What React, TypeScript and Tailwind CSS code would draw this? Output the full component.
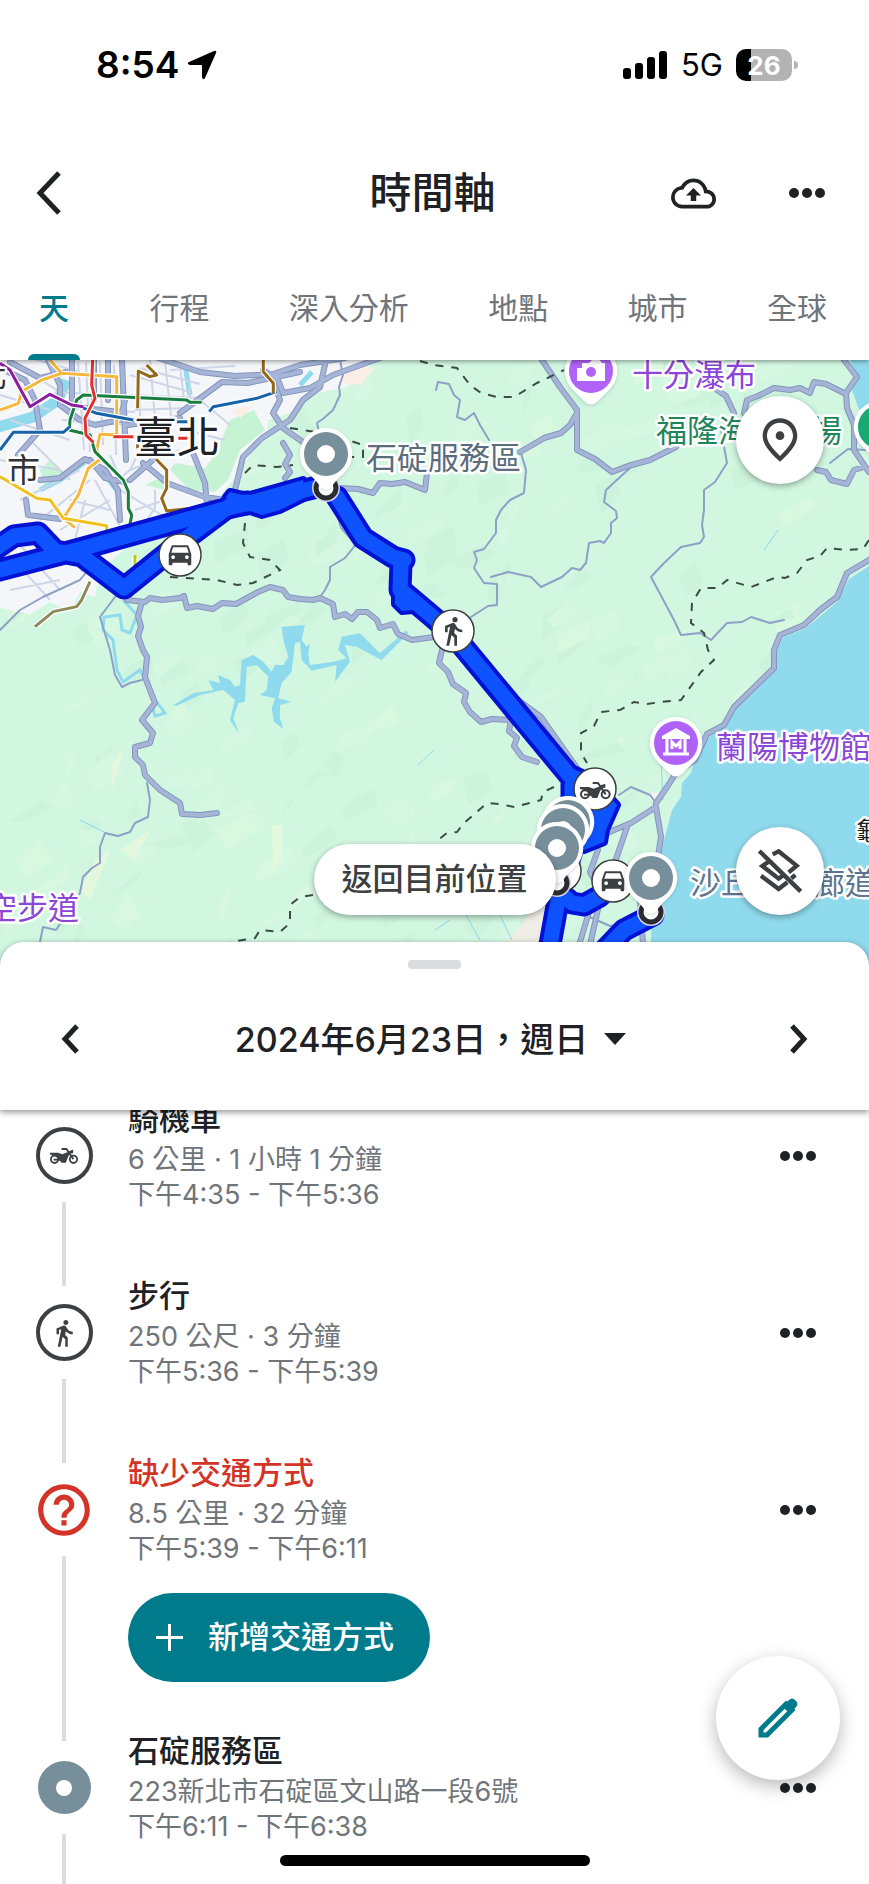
import type { ReactNode } from "react";
import { MdDirectionsCar, MdDirectionsWalk, MdOutlineBackup, MdOutlineHelpOutline, MdOutlinePlace } from "react-icons/md";

const tabs = ["天", "行程", "深入分析", "地點", "城市", "全球"];

const roads = [
  "M326 360 320 387 303 400 290 420 262 438 243 457 235 490",
  "M150 355 200 372 235 376 273 374 300 365 345 358",
  "M380 358 333 375 310 388 283 393 278 380 263 370",
  "M180 413 222 382 248 383 300 372",
  "M193 453 205 483 207 505",
  "M143 463 167 483 205 497 225 500",
  "M273 380 280 400 273 413 283 428 300 440 310 447",
  "M283 443 290 455 285 464 290 472 285 478",
  "M127 600 145 602 150 598 162 600 180 598 184 596 187 608 197 606 213 609 222 603 236 604 247 598 258 592 270 587 283 590 288 597 300 599 313 600 320 598 333 604 335 617 345 614 352 619 358 612 367 612 377 620 380 628 393 624 398 634 412 640 434 637",
  "M142 602 138 616 141 627 138 636 143 650 147 657 145 677 155 703 142 720 153 733 150 743 135 747 135 757 143 765 145 775 160 790 180 803 182 814 200 815 217 813",
  "M542 360 560 387 577 410 577 450 595 459 612 472 628 466 650 460 676 447",
  "M717 390 726 396 734 413",
  "M744 413 747 400 758 396 774 388 790 390 800 388 810 393 814 382 826 384 844 393",
  "M844 360 857 377 846 393 847 408 854 425 854 450 869 472",
  "M817 470 826 472 831 480 847 484 854 470 864 467",
  "M577 413 570 425 561 433 544 438 534 444 520 452",
  "M442 650 439 663 448 672 453 684 466 693 464 702 470 712 481 722 492 719 511 720 509 731 517 738 514 746 522 757 537 762",
  "M514 697 541 717 560 744 577 768",
  "M607 833 631 823 656 807 661 837 657 862",
  "M869 560 847 573 837 597 820 610 804 625 780 635 774 650 774 668 734 707 724 725 707 734 695 760 676 773 667 787 656 803",
  "M627 827 614 865 600 900 590 945",
  "M598 850 590 872 597 885 580 942",
  "M640 900 643 945",
  "M26 500 28 515 60 519",
  "M40 480 60 478 85 459 105 470 118 490 120 520",
  "M48 360 60 385 60 405 80 420 95 425 120 420 125 400",
  "M72 360 72 400 M94 360 94 400 M108 360 108 400 M122 360 126 460",
  "M0 368 25 380 35 400 40 430 18 455",
  "M130 480 155 458 170 440M10 362 40 378 66 372M84 408 120 412M128 425 180 418",
  "M340 488 358 489 373 493 380 483 392 484 405 482 425 490 427 473",
  "M337 507 343 527 357 543",
  "M207 505 190 513M90 460 105 478 125 482",
];

const lanes = [
  "M340 360 343 375 339 387 340 395 333 410 324 418 317 423 320 437",
  "M357 543 345 558 330 567 330 580 325 590 320 597 313 600",
  "M115 597 100 617 110 650 115 675 122 687 130 683 142 680",
  "M147 783 150 800 148 817 135 823 130 832 118 836 105 833 100 847 100 863 92 868 83 877 80 893 62 921 56 930 43 927 40 942",
  "M0 630 20 610 43 597 80 580 100 555",
  "M521 453 526 470 524 493 510 500 501 510 496 520 496 533 484 549 474 552 477 560 474 568 480 577 484 583 497 584 497 605 488 606 471 617",
  "M631 467 606 490 604 502 616 511 617 518 611 523 611 533 604 543 600 541 589 543 586 563 580 570 572 568 562 577 541 587 531 577 508 572 491 577",
  "M721 430 727 463 715 482 704 490 704 510 702 525 704 537 700 543 681 547 664 563 651 577 666 605 674 620 681 635 700 633 711 640 727 623 742 622 751 617 770 623 784 620",
  "M436 390 438 382 449 384 454 395 460 400 457 417 465 420 474 413 480 425 489 440",
  "M619 795 631 787 650 795 656 803",
  "M585 915 610 926 640 920",
  "M830 463 848 449 866 450",
];

const streets =
  "M10 360 60 392M30 358 80 372M55 392 130 396M60 408 135 412M62 420 125 425M78 362 84 450M100 362 103 445M114 365 116 455M140 380 140 440M150 360 156 430M165 362 172 425M130 375 190 392M130 395 200 398M135 410 185 408M0 460 60 470M20 500 80 470M40 520 90 480M60 530 110 500M30 440 70 480M95 480 130 545M85 500 75 540M110 455 130 500M130 470 180 450M135 510 165 500M140 530 155 508 155 490M60 560 110 540M20 545 60 590M80 570 110 580M70 500 110 510M200 400 230 425M185 430 225 440M120 490 170 520M10 590 60 580M145 440 130 470 118 480M190 380 190 410M170 370 235 366M86 362 90 452M0 395 50 410M10 420 70 440M0 545 50 600M180 365 184 400M140 368 200 384";

const boundaries = [
  "M245 523 243 543 250 557 270 560 280 570 253 583 237 585 217 580 170 577",
  "M245 473 253 465 277 467 293 465",
  "M290 428 333 435 363 445 363 457 340 457",
  "M420 361 434 365 457 368 470 385 481 393 497 397 514 397 537 383 564 370",
  "M869 540 863 549 847 550 827 548 820 556 807 560 797 573 785 578 777 577 751 587 727 580 718 588 701 588 692 603 691 623 704 633 708 650 714 660 701 672 681 700 661 702 647 704 634 702 620 710 601 712 594 726 581 733 581 753 587 763",
  "M554 787 543 792 541 800 514 807 500 804 487 803 464 823 457 832 447 833 434 843",
  "M313 895 300 897 290 905 290 923 280 932 260 930 255 938 230 942",
];

const metroLines = [
  { color: "#f5b83d", d: "M0 165 55 145 65 110 125 75 185 55 350 65 350 240 300 238 290 285 305 310 265 340 235 420 190 490 225 518M150 15 185 55" },
  { color: "#f0c020", d: "M0 365 110 430 150 435 190 490 320 512 320 530" },
  { color: "#187d3e", d: "M605 142 570 142 560 135 250 120 230 135 210 195 208 225 270 240 285 290 370 375 385 410 385 460 395 480 388 520" },
  { color: "#1763ab", d: "M0 285 40 232 190 232 210 215M240 155 290 175 400 195M530 200 562 200M628 170 640 155 770 130 830 110" },
  { color: "#8b1c9e", d: "M0 25 30 45 90 155 150 118 215 150 250 155" },
  { color: "#e0312f", d: "M278 15 275 90 285 130 255 190 258 240 280 262M340 245 400 245M535 250 562 250" },
  { color: "#94681a", d: "M440 30 470 60 450 65 415 48 413 160M413 240 413 280M468 312 500 345 500 400 485 430 500 468 575 460M790 15 790 50 820 85 820 115" },
  { color: "#8f8a5c", d: "M270 680 245 735 230 755 160 770 105 815" },
  { color: "#b5cc1f", d: "M330 655 380 675 405 655 405 600" },
];

// Terrain facets: fixed seed, so the relief is the same on every render.
function makeFacets(count: number) {
  let seed = 41;
  const next = (min: number, max: number) => {
    seed = (seed * 16807) % 2147483647;
    return Math.round(min + (seed / 2147483647) * (max - min));
  };
  return Array.from({ length: count }, (_, i) => {
    const x = next(0, 869);
    const y = next(365, 950);
    const w = next(8, 34);
    return {
      d: `M${x} ${y}l${w} ${next(-26, -6)} ${next(-4, 14)} ${next(4, 22)} ${-w} ${next(4, 22)}Z`,
      color: i % 7 === 0 ? "#e0f9e0" : i % 2 ? "#c8f0d8" : "#dbf9e6",
    };
  });
}

const facets = makeFacets(260);

const labels = [
  { text: "北", x: -24, y: 387, size: 31, fill: "#303236" },
  { text: "臺北", x: 134, y: 453, size: 43, fill: "#202124" },
  { text: "市", x: 7, y: 482, size: 33, fill: "#303236" },
  { text: "石碇服務區", x: 366, y: 469, size: 31, fill: "#5b6c7d" },
  { text: "十分瀑布", x: 632, y: 386, size: 31, fill: "#8b46d8" },
  { text: "福隆海水浴場", x: 656, y: 442, size: 31, fill: "#1f855a" },
  { text: "蘭陽博物館", x: 716, y: 758, size: 31, fill: "#8b46d8" },
  { text: "空步道", x: -14, y: 919, size: 31, fill: "#8b46d8" },
  { text: "沙丘生態廊道", x: 690, y: 894, size: 31, fill: "#5b7590" },
  { text: "龜山島", x: 856, y: 840, size: 25, fill: "#202124" },
];

function MotorcycleShape() {
  return (
    <g>
      <g fill="none" stroke="#3c4043" strokeWidth="6">
        <circle cx="15" cy="37" r="12" />
        <circle cx="77" cy="37" r="12" />
        <path d="M38 3H54L77 37" />
      </g>
      <path fill="#3c4043" d="M0 15H27L40 20 57 14 62 10 76 5V17L66 19 60 28 52 48H38L30 38 22 26 0 21Z" />
      <path stroke="#3c4043" strokeWidth="6" d="M12 38H36" />
    </g>
  );
}

function PlacePin({ x, y }: { x: number; y: number }) {
  return (
    <g transform={`translate(${x} ${y})`}>
      <path className="drop-shadow" fill="#fff" d="M0-26A26 26 0 0 1 19 18C12 25 8 28 6 33Q0 38-6 33C-8 28-12 25-19 18A26 26 0 0 1 0-26Z" />
      <circle r="22" fill="#778f9b" />
      <circle r="9" fill="#fff" />
    </g>
  );
}

function Stop({ x, y }: { x: number; y: number }) {
  return (
    <g>
      <circle cx={x} cy={y} r="14" fill="#d9d3ee" />
      <circle cx={x} cy={y} r="10" fill="#fff" stroke="#2b2c2f" strokeWidth="5" />
    </g>
  );
}

function ModeMarker({ x, y, children }: { x: number; y: number; children?: ReactNode }) {
  return (
    <g transform={`translate(${x} ${y})`}>
      <circle r="21" fill="#fff" stroke="#3c4043" strokeWidth="1.5" />
      {children}
    </g>
  );
}

function PoiPin({ x, y, color, children }: { x: number; y: number; color: string; children?: ReactNode }) {
  return (
    <g transform={`translate(${x} ${y})`}>
      <path className="drop-shadow" fill="#fff" d="M0-26A26 26 0 0 1 19 18L6 31Q0 36-6 31L-19 18A26 26 0 0 1 0-26Z" />
      <circle r="22" fill={color} />
      {children}
    </g>
  );
}

function TimelineMap() {
  const route =
    "M-8 572 80 549 228 508 326 485M-8 551 14 536 38 533 55 551 82 556 124 588 180 543 232 504M235 503 248 502M337 497 363 538 393 557 404 560M401 563 400 590M402 591 434 618 455 637 569 775 590 785M572 785 572 850 559 895 549 950M560 893 572 903 584 905 600 896M653 915 624 930 603 952";
  const blocks = "M226 497 230 492 247 496 303 480 305 491 316 492 300 500 280 510 262 515 250 511 238 513ZM395 594 395 604 402 611 424 609 420 600ZM572 780 590 775 617 805 606 830 604 842 584 850 570 830Z";
  return (
    <svg className="block h-[606px] w-full" viewBox="0 360 869 606" preserveAspectRatio="xMidYMin slice" role="img" aria-label="地圖">
      <rect y="360" width="869" height="606" fill="#d1f7e1" />
      <g opacity="0.55">
        {facets.map((facet) => (
          <path key={facet.d} d={facet.d} fill={facet.color} />
        ))}
      </g>
      <path fill="#e3f8dd" d="M272 825 283 825 282 860 273 870ZM112 765 125 745 112 790ZM95 860 110 850 90 900 80 890ZM120 850 150 830 135 860Z" />

      {/* built-up area and coast plain */}
      <path fill="#f5f6fa" d="M0 360H376L345 388 320 392 300 402 292 412 268 420 268 435 250 455 238 475 215 500 160 520 100 570 95 597 80 592 70 612 50 602 30 614 0 608Z" />
      <path fill="#c5f3d4" d="M230 420 254 410 265 430 240 450 228 480 215 492 190 490 170 470 175 463 205 468 215 455ZM40 470 50 460 70 478 45 488ZM145 485 160 478 165 490Z" />
      <path fill="#fbeee4" d="M350 365 375 368 360 385 342 383ZM232 410 255 405 240 418Z" />
      <path fill="#f0ede6" d="M521 925 535 905 548 895 568 900 560 945 505 945Z" />
      <path fill="#f0f3f5" d="M646 793 662 792 655 805Z" />

      {/* sea */}
      <path fill="#90daee" d="M850 360 858 378 852 390 858 407 869 420V360ZM869 566 849 579 837 602 806 628 782 638 776 652 774 668 736 707 726 727 709 737 694 763 691 773 682 783 681 797 672 810 664 840 654 860 650 966H869Z" />
      <path fill="#90daee" transform="translate(0 640) scale(.3333)" d="M520 195 580 160 640 150 625 120 660 130 655 105 690 120 705 140 720 135 725 60 760 45 790 65 815 95 825 75 850 75 865 50 850 0 845-40 915-45 905 0 920 20 930 10 925 40 930 75 1000 65 1040 55 1015 30 1025-10 1080-20 1140 40 1220-30 1225-20 1145 60 1070 20 1035 15 1050 65 1005 125 1010 75 935 92 905 60 900 5 885 10 875 95 845 130 835 175 875 185 840 195 840 235 850 268 822 245 815 205 825 175 780 165 800 150 805 110 770 75 740 80 735 185 715 190 700 235 718 282 690 240 705 180 670 150 600 165 530 197Z" />
      <path fill="none" stroke="#90daee" strokeWidth="11" d="M-5 428 33 417 58 400 66 380" />
      <path fill="none" stroke="#90daee" strokeWidth="5" d="M40 490 60 480 85 462M105 475 118 492M185 365 190 395M300 385 312 372" />
      <path fill="none" stroke="#90daee" strokeWidth="3" d="M123 600 137 615 130 633 122 630 120 615 104 617 103 630 113 640 117 670 123 682 140 670 155 700 165 713 155 716 152 705" />
      <path fill="none" stroke="#8fd6ea" d="M435 930 450 920M463 910 480 940M500 915 512 940M764 550 778 530M418 765 434 750M80 820 104 832M660 740 663 800" />

      <path d={streets} fill="none" stroke="#cdd6e6" strokeWidth="2" />
      <g fill="none" strokeLinejoin="round" strokeLinecap="round">
        <path d={lanes.join("")} stroke="#8fa0c6" strokeWidth="2" />
        <path d={roads.join("")} stroke="#8495bd" strokeWidth="6" />
        <path d={roads.join("")} stroke="#a6b5d7" strokeWidth="4" />
      </g>
      <path d={boundaries.join("")} fill="none" stroke="#3c4b45" strokeWidth="2" strokeDasharray="8 8" />

      <g transform="translate(0 355) scale(.3333)" fill="none" strokeLinejoin="round">
        {metroLines.map((line) => (
          <g key={line.color}>
            <path d={line.d} stroke="#fff" strokeWidth="16" />
            <path d={line.d} stroke={line.color} strokeWidth="9" />
          </g>
        ))}
      </g>

      {/* travelled route */}
      <g strokeLinejoin="round" strokeLinecap="round">
        <path d={route} fill="none" stroke="#0212d4" strokeWidth="23" />
        <path d={blocks} fill="#0212d4" stroke="#0212d4" strokeWidth="8" />
        <path d={route} fill="none" stroke="#0f52ff" strokeWidth="15" />
        <path d={blocks} fill="#0f52ff" />
      </g>

      <g fontFamily="'Noto Sans CJK TC', sans-serif" stroke="#fff" strokeWidth="5" strokeLinejoin="round" paintOrder="stroke">
        {labels.map((label) => (
          <text key={label.text} x={label.x} y={label.y} fontSize={label.size} fill={label.fill}>
            {label.text}
          </text>
        ))}
      </g>

      <PoiPin x={591} y={371} color="#b062f8">
        <path fill="#fff" d="M-13-8H-2L2-12H8L11-8H14V10H-14V-3H-9V-8Z" />
        <circle cy="1" r="5" fill="#b062f8" />
      </PoiPin>
      <PoiPin x={880} y={427} color="#18a872" />
      <PoiPin x={676} y={743} color="#b062f8">
        <path fill="none" stroke="#fff" strokeWidth="3" d="M-13 11H13M-9-4V10M9-4V10M-4 6V-1L0 3 4-1V6" />
        <path fill="#fff" d="M-14-4V-7L0-15 14-7V-4Z" />
      </PoiPin>

      <ModeMarker x={180} y={555}>
        <MdDirectionsCar x={-15} y={-16} size={30} color="#3c4043" />
      </ModeMarker>
      <ModeMarker x={453} y={631}>
        <MdDirectionsWalk x={-16} y={-16} size={32} color="#3c4043" />
      </ModeMarker>
      <ModeMarker x={595} y={789}>
        <g transform="translate(-15 -7) scale(.3333)">
          <MotorcycleShape />
        </g>
      </ModeMarker>
      <ModeMarker x={560} y={871} />
      <ModeMarker x={613} y={881}>
        <MdDirectionsCar x={-15} y={-16} size={30} color="#3c4043" />
      </ModeMarker>

      <Stop x={326} y={488} />
      <PlacePin x={326} y={454} />
      <Stop x={557} y={883} />
      <PlacePin x={568} y={822} />
      <PlacePin x={563} y={830} />
      <PlacePin x={557} y={848} />
      <Stop x={651} y={912} />
      <PlacePin x={651} y={878} />
    </svg>
  );
}

function MoreIcon() {
  return (
    <svg width="36" height="10" viewBox="0 0 36 10" fill="#202124" aria-hidden="true">
      <circle cx="5" cy="5" r="5" />
      <circle cx="18" cy="5" r="5" />
      <circle cx="31" cy="5" r="5" />
    </svg>
  );
}

type EntryProps = {
  icon: ReactNode;
  title: string;
  detail: string;
  time: string;
  titleClass?: string;
  className?: string;
  children?: ReactNode;
};

function Entry({ icon, title, detail, time, titleClass = "text-[#202124]", className = "pb-[30px]", children }: EntryProps) {
  return (
    <li className="flex pr-[53px] pl-[35px] last:flex-1">
      <div className="flex w-[58px] shrink-0 flex-col items-center gap-[18px]">
        <span className="h-[43px] w-1 bg-[#dadce0]" />
        <span className="flex h-[57px] w-[58px] items-center justify-center">{icon}</span>
        <span className="w-1 flex-1 bg-[#dadce0]" />
      </div>
      <div className={`ml-[35px] min-w-0 flex-1 pt-[30px] ${className}`}>
        <h2 className={`text-[31px] leading-[46px] font-medium ${titleClass}`}>{title}</h2>
        <p className="text-[27px] leading-[35px] text-[#70757a]">{detail}</p>
        <p className="text-[27px] leading-[35px] text-[#70757a]">{time}</p>
        {children}
      </div>
      <button aria-label="更多選項" className="mt-[85px] h-[10px]">
        <MoreIcon />
      </button>
    </li>
  );
}

function Ring({ children }: { children: ReactNode }) {
  return <span className="flex h-[57px] w-[57px] items-center justify-center rounded-full border-4 border-[#3c4043]">{children}</span>;
}

export default function App() {
  return (
    <div className="relative flex min-h-screen flex-col overflow-hidden bg-white font-['Inter','Noto_Sans_CJK_TC',sans-serif] text-[#202124]">
      <header className="relative z-10 bg-white shadow-[0_1px_5px_rgba(0,0,0,0.45)]">
        <div className="flex h-[130px] items-center justify-between pr-[71px] pl-24 text-black">
          <div className="flex items-center gap-2">
            <span className="text-[37px] font-semibold">8:54</span>
            <svg width="30" height="30" viewBox="0 0 30 30" aria-hidden="true">
              <path d="M27 1Q30 0 29 3L18 28Q16 31 15 27V15H3Q-1 14 2 12Z" />
            </svg>
          </div>
          <div className="flex items-center gap-[13px]">
            <svg width="45" height="28" viewBox="0 0 45 28" aria-hidden="true">
              <rect y="17" width="8" height="11" rx="3" />
              <rect x="12" y="12" width="8" height="16" rx="3" />
              <rect x="24" y="6" width="8" height="22" rx="3" />
              <rect x="36" width="8" height="28" rx="3" />
            </svg>
            <span className="text-[31px]">5G</span>
            <div className="flex items-center gap-[2px]">
              <span className="flex h-8 w-14 items-center justify-center rounded-[10px] bg-[linear-gradient(90deg,#000_27%,#b3b3b3_27%)] text-[26px] font-bold text-white">26</span>
              <span className="h-2 w-1 rounded-r-full bg-[#b3b3b3]" />
            </div>
          </div>
        </div>

        <div className="grid h-[126px] grid-cols-[1fr_auto_1fr] items-center pr-11 pl-9">
          <button aria-label="返回" className="justify-self-start">
            <svg width="26" height="44" viewBox="0 0 26 44" fill="none" stroke="#202124" strokeWidth="5" aria-hidden="true">
              <path d="M23 2 4 22 23 42" />
            </svg>
          </button>
          <h1 className="pl-1 text-[42px] leading-none font-medium">時間軸</h1>
          <div className="flex items-center gap-[73px] justify-self-end">
            <button aria-label="備份">
              <MdOutlineBackup size={45} />
            </button>
            <button aria-label="更多">
              <MoreIcon />
            </button>
          </div>
        </div>

        <div role="tablist" className="flex h-[104px] justify-between pr-8 pl-7">
          {tabs.map((tab, i) => (
            <button
              key={tab}
              role="tab"
              aria-selected={i === 0}
              className={
                i === 0
                  ? "flex flex-col items-center justify-between pt-[30px] text-[30px] leading-[44px] font-medium text-[#007b8b]"
                  : "flex flex-col items-center justify-between px-[10px] pt-[30px] text-[30px] leading-[44px] text-[#70757a]"
              }
            >
              {tab}
              {i === 0 && <span className="h-[6px] w-[52px] rounded-t-md bg-[#007b8b]" />}
            </button>
          ))}
        </div>
      </header>

      <section className="relative">
        <TimelineMap />
        <button aria-label="地點" className="absolute top-9 right-[45px] flex h-[88px] w-[88px] items-center justify-center rounded-full bg-white shadow-[0_2px_6px_rgba(0,0,0,0.35)]">
          <MdOutlinePlace size={52} color="#3c4043" />
        </button>
        <button aria-label="圖層" className="absolute right-[45px] bottom-[51px] flex h-[88px] w-[88px] items-center justify-center rounded-full bg-white shadow-[0_2px_6px_rgba(0,0,0,0.35)]">
          <svg width="44" height="44" viewBox="0 0 132 132" fill="none" stroke="#3c4043" strokeWidth="13" aria-hidden="true">
            <path d="M4 6 128 127M44 16 62 7 116 50 92 70M9 80 62 120 88 100M32 38 13 51 62 89 76 79M100 88 112 78" />
          </svg>
        </button>
        <button className="absolute bottom-[51px] left-1/2 flex h-[71px] -translate-x-1/2 items-center rounded-full bg-white px-7 text-[31px] font-medium whitespace-nowrap text-[#3c4043] shadow-[0_2px_6px_rgba(0,0,0,0.35)]">
          返回目前位置
        </button>
      </section>

      <section className="relative z-10 -mt-6 flex h-[168px] flex-col items-center rounded-t-[24px] bg-white pt-[18px] shadow-[0_2px_6px_rgba(0,0,0,0.45)]">
        <span className="h-[9px] w-[53px] rounded bg-[#dadce0]" />
        <div className="flex h-[140px] w-full items-center justify-between px-[61px]">
          <button aria-label="前一天">
            <svg width="18" height="30" viewBox="0 0 18 30" fill="none" stroke="#202124" strokeWidth="5" aria-hidden="true">
              <path d="M16 2 4 15 16 28" />
            </svg>
          </button>
          <button className="flex items-center gap-4 pr-2 text-[34px] font-medium">
            2024年6月23日，週日
            <svg width="22" height="12" viewBox="0 0 22 12" fill="#202124" aria-hidden="true">
              <path d="M0 0H22L11 12Z" />
            </svg>
          </button>
          <button aria-label="後一天">
            <svg width="18" height="30" viewBox="0 0 18 30" fill="none" stroke="#202124" strokeWidth="5" aria-hidden="true">
              <path d="M2 2 14 15 2 28" />
            </svg>
          </button>
        </div>
      </section>

      <ul className="-mt-11 flex flex-1 flex-col">
        <Entry
          title="騎機車"
          detail="6 公里 · 1 小時 1 分鐘"
          time="下午4:35 - 下午5:36"
          className="pb-[31px]"
          icon={
            <Ring>
              <svg width="28" height="16" viewBox="0 0 92 52" aria-hidden="true">
                <MotorcycleShape />
              </svg>
            </Ring>
          }
        />
        <Entry
          title="步行"
          detail="250 公尺 · 3 分鐘"
          time="下午5:36 - 下午5:39"
          className="pb-[31px]"
          icon={
            <Ring>
              <MdDirectionsWalk size={30} color="#3c4043" />
            </Ring>
          }
        />
        <Entry
          title="缺少交通方式"
          titleClass="text-[#d33427]"
          detail="8.5 公里 · 32 分鐘"
          time="下午5:39 - 下午6:11"
          className="pb-4"
          icon={<MdOutlineHelpOutline size={62} color="#d33427" className="shrink-0" />}
        >
          <button className="mt-[27px] flex h-[89px] items-center gap-[25px] rounded-full bg-[#007b8b] pr-9 pl-7 text-[31px] font-medium whitespace-nowrap text-white">
            <svg width="27" height="27" viewBox="0 0 27 27" stroke="currentColor" strokeWidth="3" aria-hidden="true">
              <path d="M13.5 0V27M0 13.5H27" />
            </svg>
            新增交通方式
          </button>
        </Entry>
        <Entry
          title="石碇服務區"
          detail="223新北市石碇區文山路一段6號"
          time="下午6:11 - 下午6:38"
          icon={
            <span className="flex h-[53px] w-[53px] items-center justify-center rounded-full bg-[#778f9b]">
              <span className="h-4 w-4 rounded-full bg-white" />
            </span>
          }
        />
      </ul>

      <button aria-label="編輯" className="absolute right-[29px] bottom-[104px] flex h-[124px] w-[124px] items-center justify-center rounded-full bg-white shadow-[0_6px_18px_rgba(0,0,0,0.28)]">
        <svg width="40" height="40" viewBox="0 0 40 40" aria-hidden="true">
          <path fill="none" stroke="#007b8b" strokeWidth="5" d="M3 37V31L28 6 34 12 9 37Z" />
          <path fill="#007b8b" d="M24 8 31 2Q34-1 37 2L38 3Q41 6 38 9L32 16Z" />
        </svg>
      </button>
      <span className="absolute bottom-[18px] left-1/2 h-[11px] w-[310px] -translate-x-1/2 rounded-full bg-black" />
    </div>
  );
}
